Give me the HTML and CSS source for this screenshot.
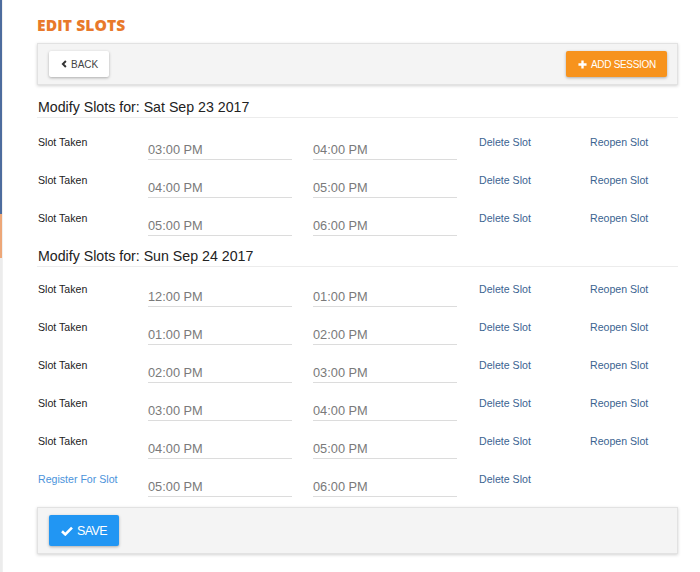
FILE: index.html
```html
<!DOCTYPE html>
<html lang="en">
  <head>
    <meta charset="UTF-8" />
    <meta name="viewport" content="width=device-width, initial-scale=1.0" />
    <title>Edit Slots</title>
    <link rel="stylesheet" href="styles.css">
  </head>
  <body>
    <div class="page">
      <div class="side-edge">
        <div class="edge-blue"></div>
        <div class="edge-orange"></div>
        <div class="edge-rest"></div>
      </div>

      <div class="main">
        <h1 class="page-title">EDIT SLOTS</h1>

        <!-- top toolbar -->
        <div class="panel toolbar">
          <button class="btn btn-default">
            <svg class="ico-chevron" viewBox="0 0 8 10" width="6" height="8">
              <path d="M6.5 1 L2.5 5 L6.5 9" fill="none" stroke="#333" stroke-width="2.6" />
            </svg>
            BACK
          </button>
          <button class="btn btn-orange">
            <svg viewBox="0 0 10 10" width="9" height="9">
              <path d="M5 0.5 V9.5 M0.5 5 H9.5" stroke="#fff" stroke-width="2.6" />
            </svg>
            ADD SESSION
          </button>
        </div>

        <!-- day 1 -->
        <h2 class="day-title">Modify Slots for: Sat Sep 23 2017</h2>
        <div class="slot-row">
          <div class="slot-status">Slot Taken</div>
          <div class="time-field">03:00 PM</div>
          <div class="time-field">04:00 PM</div>
          <a class="slot-link">Delete Slot</a>
          <a class="slot-link">Reopen Slot</a>
        </div>
        <div class="slot-row">
          <div class="slot-status">Slot Taken</div>
          <div class="time-field">04:00 PM</div>
          <div class="time-field">05:00 PM</div>
          <a class="slot-link">Delete Slot</a>
          <a class="slot-link">Reopen Slot</a>
        </div>
        <div class="slot-row">
          <div class="slot-status">Slot Taken</div>
          <div class="time-field">05:00 PM</div>
          <div class="time-field">06:00 PM</div>
          <a class="slot-link">Delete Slot</a>
          <a class="slot-link">Reopen Slot</a>
        </div>

        <!-- day 2 -->
        <h2 class="day-title second">Modify Slots for: Sun Sep 24 2017</h2>
        <div class="slot-row">
          <div class="slot-status">Slot Taken</div>
          <div class="time-field">12:00 PM</div>
          <div class="time-field">01:00 PM</div>
          <a class="slot-link">Delete Slot</a>
          <a class="slot-link">Reopen Slot</a>
        </div>
        <div class="slot-row">
          <div class="slot-status">Slot Taken</div>
          <div class="time-field">01:00 PM</div>
          <div class="time-field">02:00 PM</div>
          <a class="slot-link">Delete Slot</a>
          <a class="slot-link">Reopen Slot</a>
        </div>
        <div class="slot-row">
          <div class="slot-status">Slot Taken</div>
          <div class="time-field">02:00 PM</div>
          <div class="time-field">03:00 PM</div>
          <a class="slot-link">Delete Slot</a>
          <a class="slot-link">Reopen Slot</a>
        </div>
        <div class="slot-row">
          <div class="slot-status">Slot Taken</div>
          <div class="time-field">03:00 PM</div>
          <div class="time-field">04:00 PM</div>
          <a class="slot-link">Delete Slot</a>
          <a class="slot-link">Reopen Slot</a>
        </div>
        <div class="slot-row">
          <div class="slot-status">Slot Taken</div>
          <div class="time-field">04:00 PM</div>
          <div class="time-field">05:00 PM</div>
          <a class="slot-link">Delete Slot</a>
          <a class="slot-link">Reopen Slot</a>
        </div>
        <div class="slot-row">
          <a class="slot-status register">Register For Slot</a>
          <div class="time-field">05:00 PM</div>
          <div class="time-field">06:00 PM</div>
          <a class="slot-link">Delete Slot</a>
        </div>

        <!-- save bar -->
        <div class="panel save-bar">
          <button class="btn btn-blue">
            <svg viewBox="0 0 12 10" width="12" height="10">
              <path d="M1 5.2 L4.3 8.4 L11 1.6" fill="none" stroke="#fff" stroke-width="2.6" />
            </svg>
            SAVE
          </button>
        </div>
      </div>
    </div>
  </body>
</html>
```

FILE: styles.css
```css
/* General */
body {
  margin: 0;
  padding: 0;
  background: #fff;
  font-family: "Liberation Sans", Arial, sans-serif;
  color: #222;
}

.page {
  display: flex;
  min-height: 572px;
}

/* thin sidebar edge on the left */
.side-edge {
  width: 2px;
  display: flex;
  flex-direction: column;
  border-right: 1px solid #f0f0f0;
}

.edge-blue {
  height: 214px;
  background: #4d6c9e;
}

.edge-orange {
  height: 44px;
  background: #eda778;
}

.edge-rest {
  flex: 1;
  background: #ececec;
}

.main {
  flex: 1;
  padding: 0 22px 0 34px;
}

.page-title {
  font-family: "Open Sans", sans-serif;
  font-weight: 800;
  font-size: 15.6px;
  line-height: 22px;
  color: #e8792b;
  margin: 14px 0 7px;
  letter-spacing: 0.1px;
}

/* Panels */
.panel {
  background: #f4f4f4;
  border: 1px solid #e2e2e2;
  box-shadow: 0px 1px 3px rgba(0, 0, 0, 0.18);
  display: flex;
  align-items: center;
  justify-content: space-between;
}

.toolbar {
  height: 40px;
  padding: 0 10px 0 11px;
}

.save-bar {
  height: 45px;
  padding: 0 11px;
  margin-top: 6px;
}

/* Buttons */
.btn {
  border: none;
  border-radius: 2px;
  font-family: "Liberation Sans", Arial, sans-serif;
  display: flex;
  align-items: center;
  gap: 4px;
  cursor: pointer;
  box-shadow: 0px 1px 3px rgba(0, 0, 0, 0.3);
}

.btn-default {
  background: #fff;
  color: #444;
  height: 26px;
  padding: 0 11px 0 12px;
  font-size: 10px;
}

.btn-orange {
  background: #f7931d;
  color: #fff;
  height: 26px;
  padding: 0 11px 0 12px;
  font-size: 10px;
  letter-spacing: -0.3px;
}

.btn-blue {
  background: #2196f3;
  color: #fff;
  height: 31px;
  padding: 0 12px 0 12px;
  font-size: 12.5px;
  letter-spacing: -0.6px;
}

/* Day headings */
.day-title {
  font-size: 14.2px;
  font-weight: normal;
  line-height: 20px;
  margin: 12px 0 8px;
  padding-left: 1px;
  border-bottom: 1px solid #ececec;
}

.day-title.second {
  margin-top: 6px;
  margin-bottom: 6px;
}

/* Slot rows */
.slot-row {
  display: grid;
  grid-template-columns: 111px 165px 166px 111px 1fr;
  height: 38px;
  font-size: 10.6px;
  line-height: 14px;
}

.slot-status {
  padding-top: 9px;
  padding-left: 1px;
}

.slot-status.register {
  color: #4b93db;
}

.time-field {
  width: 144px;
  height: 16px;
  padding-top: 17px;
  border-bottom: 1px solid #dcdcdc;
  font-size: 12.8px;
  line-height: 14px;
  color: #7a7a7a;
}

.slot-link {
  color: #3b6391;
  padding-top: 9px;
  cursor: pointer;
}
```
